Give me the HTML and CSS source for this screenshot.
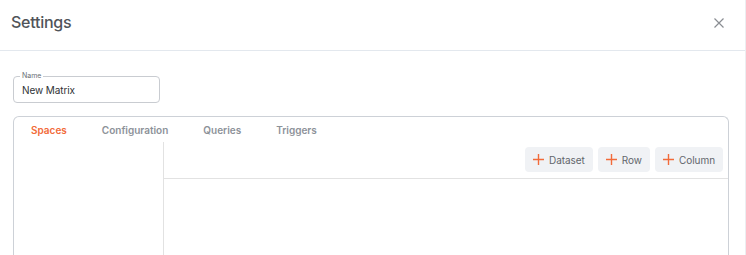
FILE: index.html
```html
<!DOCTYPE html>
<html>
<head>
<meta charset="utf-8">
<link rel="stylesheet" href="styles.css">
</head>
<body>
<div class="dialog">
  <header class="dialog-header">
    <h1 class="dialog-title">Settings</h1>
    <button class="close-btn" aria-label="Close">
      <svg width="10" height="10" viewBox="0 0 10 10"><path d="M0.5 0.5 L9.5 9.5 M9.5 0.5 L0.5 9.5" stroke="#8a8d92" stroke-width="1.2" fill="none"/></svg>
    </button>
  </header>
  <div class="dialog-body">
    <fieldset class="field">
      <legend class="field-label">Name</legend>
      <div class="field-value">New Matrix</div>
    </fieldset>
    <div class="tabs-box">
      <nav class="tabs">
        <span class="tab active">Spaces</span>
        <span class="tab">Configuration</span>
        <span class="tab">Queries</span>
        <span class="tab">Triggers</span>
      </nav>
      <div class="panes">
        <div class="pane-left"></div>
        <div class="pane-right">
          <div class="toolbar">
            <button class="tool-btn"><svg width="11" height="11" viewBox="0 0 11 11"><path d="M5.5 0 V11 M0 5.5 H11" stroke="#f26b3a" stroke-width="1.4"/></svg>Dataset</button>
            <button class="tool-btn"><svg width="11" height="11" viewBox="0 0 11 11"><path d="M5.5 0 V11 M0 5.5 H11" stroke="#f26b3a" stroke-width="1.4"/></svg>Row</button>
            <button class="tool-btn"><svg width="11" height="11" viewBox="0 0 11 11"><path d="M5.5 0 V11 M0 5.5 H11" stroke="#f26b3a" stroke-width="1.4"/></svg>Column</button>
          </div>
          <div class="canvas"></div>
        </div>
      </div>
    </div>
  </div>
</div>
</body>
</html>
```
FILE: styles.css
```css
* { box-sizing: border-box; }
html, body { margin: 0; padding: 0; background: #fff; }
body {
  font-family: Inter, "Open Sans", "Liberation Sans", sans-serif;
  height: 255px;
  overflow: hidden;
}
.dialog {
  width: 746px;
  height: 255px;
  border-right: 1px solid #eceef1;
  display: flex;
  flex-direction: column;
}
.dialog-header {
  height: 51px;
  border-bottom: 1px solid #e3e8ee;
  display: flex;
  align-items: center;
  justify-content: space-between;
  padding: 0 21px 0 11px;
}
.dialog-title {
  margin: 0;
  font-size: 16px;
  font-weight: 500;
  color: #505459;
  letter-spacing: -0.25px;
  padding-bottom: 6px;
}
.close-btn {
  border: 0;
  background: none;
  padding: 0;
  width: 10px;
  height: 10px;
  display: flex;
  margin-bottom: 5px;
}
.dialog-body {
  padding: 21px 16px 0 13px;
  flex: 1;
  display: flex;
  flex-direction: column;
}
.field {
  margin: 0;
  width: 147px;
  height: 31px;
  border: 1px solid #c9ccd1;
  border-radius: 4px;
  padding: 0 0 0 8px;
  min-width: 0;
}
.field-label {
  font-size: 7px;
  color: #6b6f75;
  padding: 0 2px;
  margin-left: -2px;
  line-height: 8px;
}
.field-value {
  font-size: 10px;
  color: #2f3236;
  line-height: 14px;
  margin-top: 3px;
  letter-spacing: -0.1px;
}
.tabs-box {
  margin-top: 13px;
  flex: 1;
  border: 1px solid #cdd1d7;
  border-bottom: 0;
  border-radius: 6px 6px 0 0;
  display: flex;
  flex-direction: column;
}
.tabs {
  height: 25px;
  display: flex;
  align-items: center;
}
.tab {
  font-size: 10px;
  font-weight: 600;
  color: #8d9299;
  padding: 0 17.5px;
  letter-spacing: 0;
}
.tab:first-child { padding-left: 17px; }
.tab.active { color: #f26b3a; }
.panes {
  flex: 1;
  display: flex;
}
.pane-left {
  width: 150px;
  border-right: 1px solid #e2e2e2;
}
.pane-right {
  flex: 1;
  display: flex;
  flex-direction: column;
}
.toolbar {
  display: flex;
  justify-content: flex-end;
  gap: 5px;
  padding: 5px 5px 6px;
  border-bottom: 1px solid #e2e2e2;
}
.tool-btn {
  height: 25px;
  border: 0;
  border-radius: 4px;
  background: #f0f2f5;
  color: #62666c;
  font-family: Inter, "Open Sans", "Liberation Sans", sans-serif;
  font-size: 10px;
  letter-spacing: -0.05px;
  display: flex;
  align-items: center;
  gap: 5px;
  padding: 0 8px 0 8px;
}
.canvas { flex: 1; }
```
